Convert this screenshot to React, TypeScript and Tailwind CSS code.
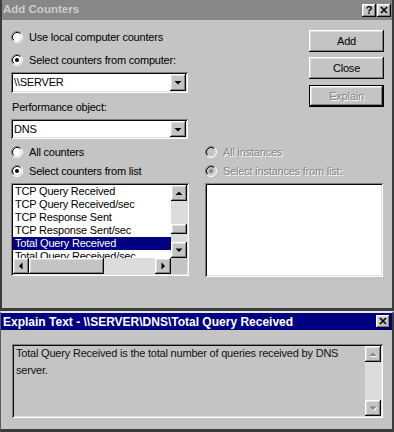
import React from "react";

const raised =
  "shadow-[inset_-1px_-1px_#0a0a0a,inset_1px_1px_#ffffff,inset_-2px_-2px_#808080,inset_2px_2px_#dfdfdf]";
const sunken =
  "shadow-[inset_1px_1px_#808080,inset_-1px_-1px_#ffffff,inset_2px_2px_#0a0a0a,inset_-2px_-2px_#dfdfdf]";
const etched = "text-[#868686] [text-shadow:1px_1px_0_#ffffff]";

type Dir = "up" | "down" | "left" | "right";

const arrowPts: Record<Dir, string> = {
  up: "4.5,10 8,6.5 11.5,10",
  down: "4.5,6.5 11.5,6.5 8,10",
  left: "9.5,4.5 9.5,11.5 6,8",
  right: "6.5,4.5 6.5,11.5 10,8",
};

const ArrowBtn = ({ dir, disabled }: { dir: Dir; disabled?: boolean }) => (
  <div className={`w-[16px] h-[16px] shrink-0 bg-[#c4c4c4] ${raised}`}>
    <svg width="16" height="16" viewBox="0 0 16 16">
      {disabled && <polygon points={arrowPts[dir]} fill="#ffffff" transform="translate(1 1)" />}
      <polygon points={arrowPts[dir]} fill={disabled ? "#868686" : "#000000"} />
    </svg>
  </div>
);

const Radio = ({ checked, disabled }: { checked?: boolean; disabled?: boolean }) => (
  <svg width="12" height="12" viewBox="0 0 12 12" className="shrink-0">
    <circle cx="6" cy="6" r="4.5" fill={disabled ? "#c4c4c4" : "#ffffff"} />
    <path d="M2.11 9.89 A5.5 5.5 0 0 1 9.89 2.11" stroke="#808080" fill="none" />
    <path d="M9.89 2.11 A5.5 5.5 0 0 1 2.11 9.89" stroke="#ffffff" fill="none" />
    <path d="M2.82 9.18 A4.5 4.5 0 0 1 9.18 2.82" stroke="#0a0a0a" fill="none" />
    <path d="M9.18 2.82 A4.5 4.5 0 0 1 2.82 9.18" stroke="#dfdfdf" fill="none" />
    {checked && <circle cx="6" cy="6" r="2" fill={disabled ? "#868686" : "#000000"} />}
  </svg>
);

const RadioRow = ({
  label,
  checked,
  disabled,
  className = "",
}: {
  label: string;
  checked?: boolean;
  disabled?: boolean;
  className?: string;
}) => (
  <div className={`h-[16px] flex items-center gap-[6px] ${className}`}>
    <Radio checked={checked} disabled={disabled} />
    <span className={disabled ? etched : ""}>{label}</span>
  </div>
);

const Combo = ({ value, className = "" }: { value: string; className?: string }) => (
  <div className={`w-[177px] bg-white ${sunken} p-[2px] flex items-stretch ${className}`}>
    <span className="flex-1 pl-[1px] leading-[16px]">{value}</span>
    <div className={`w-[16px] bg-[#c4c4c4] ${raised}`}>
      <svg width="16" height="17" viewBox="0 0 16 17">
        <polygon points="4.5,7 11.5,7 8,10.5" fill="#000000" />
      </svg>
    </div>
  </div>
);

const Btn = ({ label, disabled }: { label: string; disabled?: boolean }) => (
  <div
    className={`w-[75px] h-[22px] bg-[#c4c4c4] flex items-center justify-center ${
      disabled ? "border border-black" : ""
    } ${raised}`}
  >
    <span className={disabled ? etched : ""}>{label}</span>
  </div>
);

const counters = [
  "TCP Query Received",
  "TCP Query Received/sec",
  "TCP Response Sent",
  "TCP Response Sent/sec",
  "Total Query Received",
  "Total Query Received/sec",
];

const App = () => {
  return (
    <div className="w-[394px] h-[432px] bg-[#c4c4c4] overflow-hidden flex flex-col font-['Liberation_Sans',Arial,sans-serif] text-[11px] tracking-[-0.2px] text-black">
      {/* Add Counters window */}
      <div className="h-[311px] shrink-0 flex flex-col border-x-2 border-b-[3px] border-[#3c3c3c]">
        <div className="h-[20px] shrink-0 bg-[#878787] flex items-center pl-[1px] pr-[1px]">
          <span className="font-bold text-[11.5px] tracking-normal text-[#cdcdcd]">Add Counters</span>
          <div className="ml-auto flex gap-[1px]">
            <div className={`w-[14px] h-[13px] bg-[#c4c4c4] ${raised} flex items-center justify-center`}>
              <span className="font-bold text-[11px] leading-none tracking-normal">?</span>
            </div>
            <div className={`w-[14px] h-[13px] bg-[#c4c4c4] ${raised}`}>
              <svg width="14" height="13" viewBox="0 0 14 13">
                <path d="M4 3 L10 9 M10 3 L4 9" stroke="#000" strokeWidth="1.6" />
              </svg>
            </div>
          </div>
        </div>

        <div className="flex">
          <div className="ml-[9px] w-[178px] flex flex-col pt-[9px]">
            <RadioRow label="Use local computer counters" />
            <RadioRow label="Select counters from computer:" checked className="mt-[7px]" />
            <Combo value="\\SERVER" className="mt-[4px] h-[21px]" />
            <div className="mt-[6px] h-[16px] flex items-center pl-[1px]">Performance object:</div>
            <Combo value="DNS" className="mt-[4px] h-[20px]" />
          </div>
          <div className="ml-auto mr-[8px] pt-[10px] flex flex-col">
            <Btn label="Add" />
            <div className="mt-[5px]">
              <Btn label="Close" />
            </div>
            <div className="mt-[6px]">
              <Btn label="Explain" disabled />
            </div>
          </div>
        </div>

        <div className="flex mt-[5px]">
          <div className="ml-[9px] w-[178px] flex flex-col">
            <RadioRow label="All counters" />
            <RadioRow label="Select counters from list" checked className="mt-[3px]" />
            <div className={`mt-[4px] h-[93px] bg-white ${sunken} p-[2px] flex flex-col`}>
              <div className="flex h-[73px]">
                <div className="flex-1 overflow-hidden flex flex-col">
                  {counters.map((c, i) => (
                    <div
                      key={c}
                      className={`h-[13px] shrink-0 leading-[13px] pl-[2px] whitespace-nowrap ${
                        i === 4 ? "bg-[#000080] text-white" : ""
                      }`}
                    >
                      {c}
                    </div>
                  ))}
                </div>
                <div className="w-[16px] flex flex-col bg-[#dcdcdc]">
                  <ArrowBtn dir="up" />
                  <div className={`mt-[23px] h-[10px] bg-[#c4c4c4] ${raised}`} />
                  <div className="flex-1" />
                  <ArrowBtn dir="down" />
                </div>
              </div>
              <div className="flex h-[16px]">
                <ArrowBtn dir="left" />
                <div className={`w-[75px] bg-[#c4c4c4] ${raised}`} />
                <div className="flex-1 bg-[#dcdcdc]" />
                <ArrowBtn dir="right" />
                <div className="w-[16px] bg-[#c4c4c4]" />
              </div>
            </div>
          </div>

          <div className="ml-[16px] w-[178px] flex flex-col">
            <RadioRow label="All instances" disabled />
            <RadioRow label="Select instances from list:" checked disabled className="mt-[3px]" />
            <div className={`mt-[4px] h-[94px] bg-white ${sunken}`} />
          </div>
        </div>
      </div>

      {/* Explain Text window */}
      <div className="flex-1 flex flex-col border-t-2 border-t-[#e6e6e6] border-l border-l-[#5a5a5a] border-r-2 border-r-[#3c3c3c] border-b-[3px] border-b-[#3c3c3c]">
        <div className="h-[17px] shrink-0 bg-[#000080] flex items-center pl-[2px] pr-[2px]">
          <span className="font-bold text-[12px] tracking-normal text-white whitespace-nowrap">
            Explain Text - \\SERVER\DNS\Total Query Received
          </span>
          <div className={`ml-auto w-[14px] h-[13px] bg-[#c4c4c4] ${raised}`}>
            <svg width="14" height="13" viewBox="0 0 14 13">
              <path d="M4 3 L10 9 M10 3 L4 9" stroke="#000" strokeWidth="1.6" />
            </svg>
          </div>
        </div>
        <div className="pt-[14px] pl-[11px]">
          <div className={`w-[371px] h-[74px] bg-[#c4c4c4] ${sunken} p-[2px] flex`}>
            <div className="flex-1 pl-[2px] leading-[17px] -mt-[1px] text-[#111111]">
              Total Query Received is the total number of queries received by DNS server.
            </div>
            <div className="w-[16px] flex flex-col bg-[#dcdcdc]">
              <ArrowBtn dir="up" disabled />
              <div className="flex-1" />
              <ArrowBtn dir="down" disabled />
            </div>
          </div>
        </div>
      </div>
    </div>
  );
};

export default App;
